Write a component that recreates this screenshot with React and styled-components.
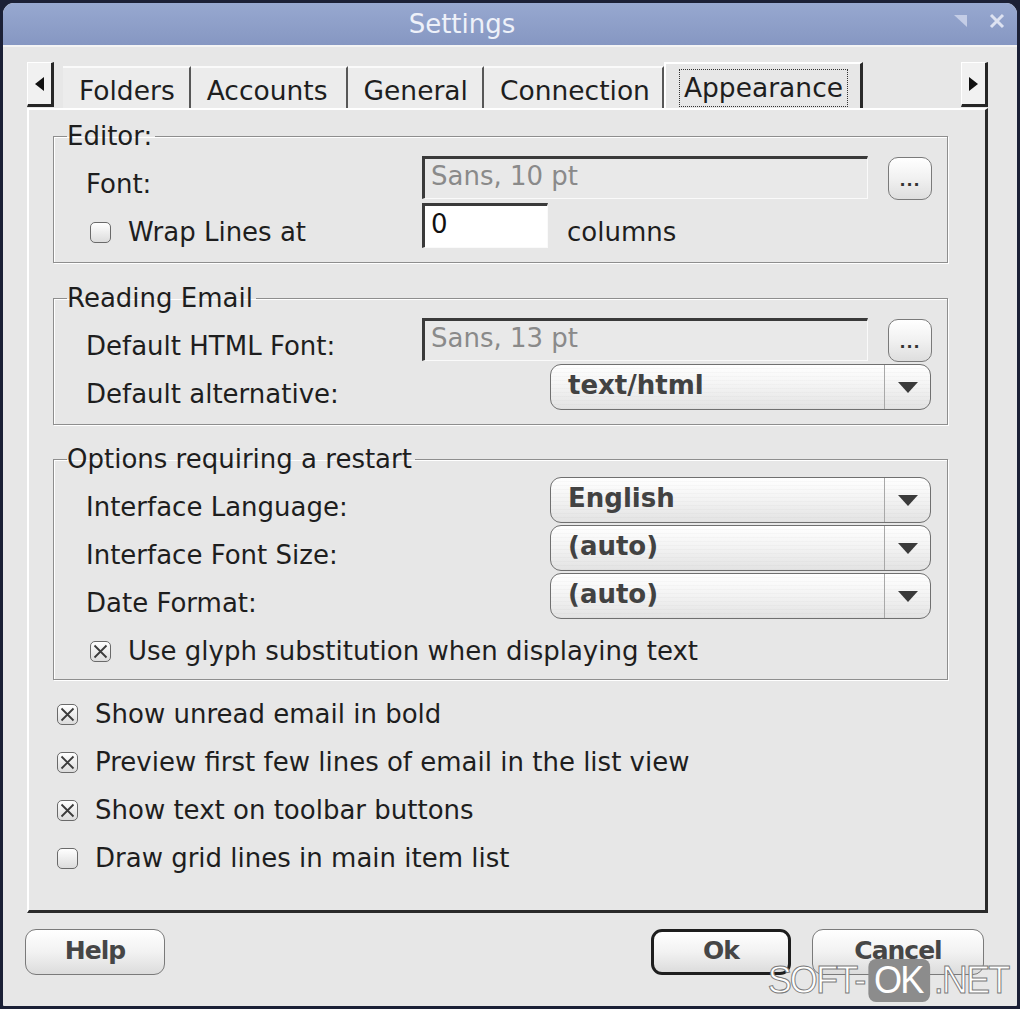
import React from 'react';
import styled, { createGlobalStyle, css } from 'styled-components';

/*──────── globals ─────*/
const GlobalStyle = createGlobalStyle`
  html, body { margin: 0; padding: 0; background: #1b2036; }
  body { font-family: "DejaVu Sans", "Noto Sans", sans-serif; color: #1e1e1e; }
`;

/*──────── window frame ─────*/
const Window = styled.div`
  position: relative;
  box-sizing: border-box;
  width: 1020px; height: 1009px;
  display: flex; flex-direction: column;
  background: #e7e7e7;
  border: 3px solid #1b2036;
  border-radius: 14px 14px 4px 4px;
  overflow: hidden;
`;

const TitleBar = styled.div`
  position: relative;
  height: 42px; flex: none;
  display: flex; align-items: center; justify-content: center;
  padding-right: 96px;
  background: linear-gradient(#97a8d0, #8697c2);
  border-bottom: 2px solid #f4f4f4;
  color: #eef1f9;
  font-size: 26px;
`;

const TitleTools = styled.div`
  position: absolute; right: 12px; top: 10px;
  display: flex; gap: 22px; align-items: center;
`;

const Body = styled.div`
  flex: 1;
  display: flex; flex-direction: column;
  padding: 15px 29px 31px 24px;
`;

/*──────── tabs ─────*/
const TabBar = styled.div`
  height: 46px; flex: none;
  display: flex; align-items: stretch;
`;

const ScrollBtn = styled.div`
  box-sizing: border-box;
  width: 27px; height: 45px;
  display: flex; align-items: center; justify-content: center;
  background: #f1f1f1;
  border-top: 1px solid #fff; border-left: 1px solid #fff;
  border-right: 3px solid #262626; border-bottom: 3px solid #262626;
  margin: 0 ${p => p.$right ? 0 : 9}px 0 ${p => p.$right ? 'auto' : 0};
`;

const Tab = styled.div`
  box-sizing: border-box;
  display: flex; align-items: center;
  padding: 4px ${p => p.$pr ?? 14}px 0 16px;
  margin-top: 4px;
  font-size: 26.5px;
  background: #ececec;
  border-top: 2px solid #fafafa;
  border-right: 2px solid #575757;
  ${p => p.$active && css`
    margin-top: 0;
    padding: 4px 13px 0 14px;
    background: #e7e7e7;
    border-left: 2px solid #fff;
    border-top: 2px solid #fff;
    border-right: 3px solid #2a2a2a;
  `}
`;

const Focus = styled.span`
  outline: 1px dotted #333;
  outline-offset: 0;
  padding: 0 4px;
  line-height: 36px;
`;

/*──────── page panel ─────*/
const Panel = styled.div`
  flex: 1;
  display: flex; flex-direction: column;
  padding: 12px 37px 0 24px;
  border-top: 2px solid #fff; border-left: 2px solid #fff;
  border-right: 3px solid #2a2a2a; border-bottom: 3px solid #2a2a2a;
`;

const Group = styled.fieldset`
  margin: 0 0 ${p => p.$mb ?? 21}px;
  padding: 3px 15px ${p => p.$pb ?? 13}px 13px;
  border: 1px solid #8e8e8e;
  box-shadow: inset 1px 1px 0 #fff, 1px 1px 0 #fff;
  min-width: 0;
`;

const Legend = styled.legend`
  padding: 0 3px 0 0;
  font-size: 26px;
  line-height: 28px;
`;

const Grid = styled.div`
  display: grid;
  grid-template-columns: 336px 1fr;
  grid-auto-rows: 48px;
  margin-left: 19px;
`;

const Label = styled.div`
  align-self: start;
  padding-top: 16px;
  font-size: 26px;
  line-height: 30px;
  white-space: nowrap;
`;

const Field = styled.div`
  display: flex; align-items: center;
  gap: ${p => p.$gap ?? 20}px;
  justify-content: ${p => p.$end ? 'flex-end' : 'flex-start'};
  min-width: 0;
`;

const LineEdit = styled.div`
  box-sizing: border-box;
  height: ${p => p.$h ?? 43}px;
  ${p => p.$w ? css`width: ${p.$w}px; flex: none;` : css`flex: 1;`}
  display: flex; align-items: center;
  padding: 0 6px 4px;
  background: ${p => p.$white ? '#fff' : '#e9e9e9'};
  border-top: 3px solid #3a3a3a; border-left: 3px solid #3a3a3a;
  border-right: 1px solid #fafafa; border-bottom: 1px solid #fafafa;
  color: ${p => p.$white ? '#111' : '#8a8a8a'};
  font-size: 26px;
`;

const DotsBtn = styled.div`
  box-sizing: border-box;
  width: 44px; height: 43px; flex: none;
  margin-top: 3px;
  display: flex; align-items: flex-end; justify-content: center;
  padding-bottom: 9px;
  border: 1.5px solid #7a7a7a; border-radius: 10px;
  background: linear-gradient(#fff, #f1f1f1 50%, #dedede);
  font-size: 16px; font-weight: bold; letter-spacing: 1px;
  color: #333;
`;

const Combo = styled.div`
  box-sizing: border-box;
  width: 381px; height: 46px;
  margin-right: 1px;
  display: flex;
  border: 1.5px solid #707070; border-radius: 11px;
  background:
    repeating-linear-gradient(transparent 0 3px, rgba(0,0,0,.02) 3px 4px),
    linear-gradient(#fff, #f4f4f4 45%, #e3e3e3);
`;

const ComboText = styled.div`
  flex: 1;
  display: flex; align-items: center;
  padding: 0 0 4px 17px;
  font-size: 26px; font-weight: bold;
  color: #424242;
`;

const ComboArrow = styled.div`
  width: 45px;
  display: flex; align-items: center; justify-content: center;
  border-left: 1px solid #a8a8a8;
`;

const Plain = styled.span`
  font-size: 26px;
  padding-top: 14px;
`;

/*──────── checkboxes ─────*/
const CheckRow = styled.div`
  display: flex; align-items: center;
  gap: 17px;
  height: 48px;
  padding-left: 4px;
  margin-left: ${p => p.$indent ?? 0}px;
  margin-top: ${p => p.$mt ?? 0}px;
  font-size: 26px;
  white-space: nowrap;
`;

const CheckLabel = styled(Label)`
  display: flex; align-items: center; gap: 17px;
  padding-left: 4px;
`;

const Box = styled.span`
  box-sizing: border-box;
  width: 21px; height: 21px; flex: none;
  display: flex; align-items: center; justify-content: center;
  border: 1.5px solid #6a6a6a; border-radius: 5px;
  background: linear-gradient(#fff, #dcdcdc);
`;

const CheckList = styled.div`
  margin-top: 10px;
`;

/*──────── dialog buttons ─────*/
const Buttons = styled.div`
  height: 46px; flex: none;
  margin: 16px 4px 0 0;
  display: flex; align-items: center; gap: 21px;
`;

const Btn = styled.div`
  box-sizing: border-box;
  width: ${p => p.$w ?? 140}px; height: 46px;
  display: flex; align-items: center; justify-content: center;
  padding-bottom: 3px;
  border: ${p => p.$default ? '3px solid #1e1e1e' : '1.5px solid #7a7a7a'};
  border-radius: 11px;
  background: linear-gradient(#fff, #f2f2f2 50%, #dcdcdc);
  font-size: 25px; font-weight: bold; letter-spacing: -1px;
  color: #464646;
  margin-left: ${p => p.$ml ?? 0}px;
`;

const Spacer = styled.div` flex: 1; `;

/*──────── watermark ─────*/
const Watermark = styled.div`
  position: absolute; right: 9px; bottom: 4px;
  display: flex; align-items: center;
  font-family: "Liberation Sans", Arial, sans-serif;
  font-size: 38px; letter-spacing: -2px;
  color: #fff;
  -webkit-text-stroke: 1px #7a7a7a;
  transform: scaleX(.95); transform-origin: right center;
`;

const WmBox = styled.span`
  background: #8c8c8c;
  border-radius: 8px;
  padding: 0 8px 0 6px;
  margin: 0 4px;
  -webkit-text-stroke: 0;
`;

/*──────── bits ─────*/
const Check = ({ on }) => (
  <Box>
    {on && (
      <svg width="15" height="15" viewBox="0 0 15 15">
        <path d="M1.5 1.5 L13.5 13.5 M13.5 1.5 L1.5 13.5" stroke="#3c3c3c" strokeWidth="1.8" />
      </svg>
    )}
  </Box>
);

const Arrow = () => (
  <svg width="20" height="11" viewBox="0 0 20 11">
    <path d="M0 0 H20 L10 11 Z" fill="#3a3a3a" />
  </svg>
);

const Select = ({ value }) => (
  <Combo>
    <ComboText>{value}</ComboText>
    <ComboArrow><Arrow /></ComboArrow>
  </Combo>
);

const tabs = [
  { t: 'Folders' }, { t: 'Accounts', pr: 18 }, { t: 'General' },
  { t: 'Connection', pr: 12 }, { t: 'Appearance', active: true },
];

export default function App() {
  return (
    <>
      <GlobalStyle />
      <Window>
        <TitleBar>
          Settings
          <TitleTools>
            <svg width="13" height="12" viewBox="0 0 13 12">
              <path d="M0 0 H13 V12 Z" fill="#c4cde6" />
            </svg>
            <svg width="16" height="16" viewBox="0 0 16 16">
              <path d="M2 2 L14 14 M14 2 L2 14" stroke="#dde2f1" strokeWidth="3" />
            </svg>
          </TitleTools>
        </TitleBar>

        <Body>
          <TabBar>
            <ScrollBtn>
              <svg width="9" height="14" viewBox="0 0 9 14"><path d="M9 0 V14 L0 7 Z" fill="#111" /></svg>
            </ScrollBtn>
            {tabs.map(({ t, pr, active }) => active
              ? <Tab key={t} $active><Focus>{t}</Focus></Tab>
              : <Tab key={t} $pr={pr}>{t}</Tab>)}
            <ScrollBtn $right>
              <svg width="9" height="14" viewBox="0 0 9 14"><path d="M0 0 V14 L9 7 Z" fill="#111" /></svg>
            </ScrollBtn>
          </TabBar>

          <Panel>
            <Group>
              <Legend>Editor:</Legend>
              <Grid>
                <Label>Font:</Label>
                <Field>
                  <LineEdit>Sans, 10 pt</LineEdit>
                  <DotsBtn>...</DotsBtn>
                </Field>
                <CheckLabel><Check />Wrap Lines at</CheckLabel>
                <Field $gap={19}>
                  <LineEdit $white $w={126} $h={45}>0</LineEdit>
                  <Plain>columns</Plain>
                </Field>
              </Grid>
            </Group>

            <Group $mb={20}>
              <Legend>Reading Email</Legend>
              <Grid>
                <Label>Default HTML Font:</Label>
                <Field>
                  <LineEdit>Sans, 13 pt</LineEdit>
                  <DotsBtn>...</DotsBtn>
                </Field>
                <Label>Default alternative:</Label>
                <Field $end><Select value="text/html" /></Field>
              </Grid>
            </Group>

            <Group $mb={0} $pb={4}>
              <Legend>Options requiring a restart</Legend>
              <Grid>
                <Label>Interface Language:</Label>
                <Field $end><Select value="English" /></Field>
                <Label>Interface Font Size:</Label>
                <Field $end><Select value="(auto)" /></Field>
                <Label>Date Format:</Label>
                <Field $end><Select value="(auto)" /></Field>
              </Grid>
              <CheckRow $indent={19} $mt={7}>
                <Check on />Use glyph substitution when displaying text
              </CheckRow>
            </Group>

            <CheckList>
              <CheckRow><Check on />Show unread email in bold</CheckRow>
              <CheckRow><Check on />Preview first few lines of email in the list view</CheckRow>
              <CheckRow><Check on />Show text on toolbar buttons</CheckRow>
              <CheckRow><Check />Draw grid lines in main item list</CheckRow>
            </CheckList>
          </Panel>

          <Buttons>
            <Btn $ml={-2}>Help</Btn>
            <Spacer />
            <Btn $default>Ok</Btn>
            <Btn $w={172}>Cancel</Btn>
          </Buttons>
        </Body>

        <Watermark>SOFT-<WmBox>OK</WmBox>.NET</Watermark>
      </Window>
    </>
  );
}
